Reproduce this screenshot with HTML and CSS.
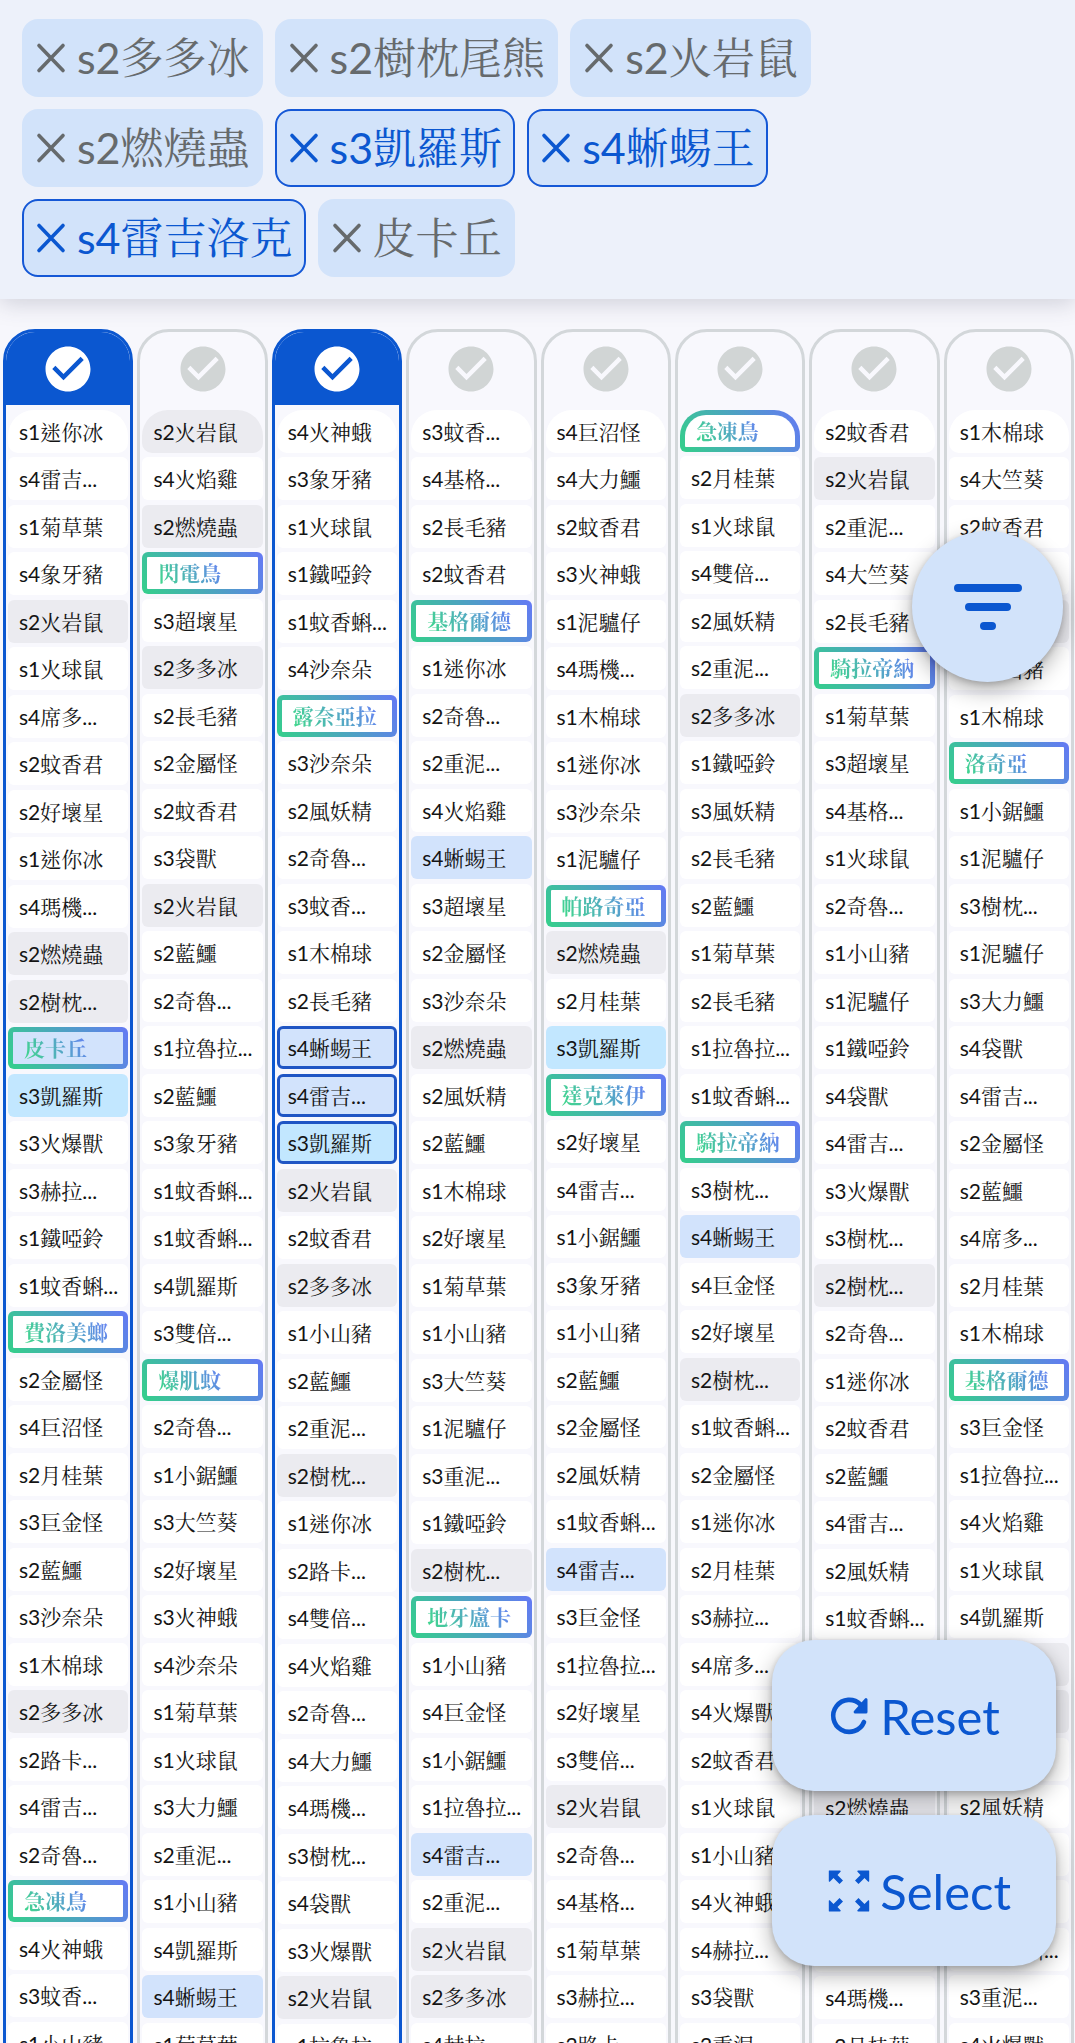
FILE: index.html
```
<!DOCTYPE html>
<html lang="zh-Hant">
<head>
<meta charset="utf-8">
<meta name="viewport" content="width=device-width, initial-scale=1">
<title>Picks</title>
<link rel="stylesheet" href="styles.css">
</head>
<body>
<svg class="defs" aria-hidden="true">
  <symbol id="close" viewBox="0 0 48 48"><path d="M12 11.500 36 36.500M36 11.500 12 36.500" fill="none" stroke="currentColor" stroke-width="3.600" stroke-linecap="round"/></symbol>
  <symbol id="check" viewBox="0 0 24 24"><path d="M12 2C6.480 2 2 6.480 2 12s4.480 10 10 10 10-4.480 10-10S17.520 2 12 2zm-2 15-5-5 1.410-1.410L10 14.170l7.590-7.590L19 8l-9 9z" fill="currentColor"/></symbol>
</svg>

<header class="chips">
  <button class="chip"><svg class="x"><use href="#close"/></svg>s2多多冰</button>
  <button class="chip"><svg class="x"><use href="#close"/></svg>s2樹枕尾熊</button>
  <button class="chip"><svg class="x"><use href="#close"/></svg>s2火岩鼠</button>
  <button class="chip"><svg class="x"><use href="#close"/></svg>s2燃燒蟲</button>
  <button class="chip chip-on"><svg class="x"><use href="#close"/></svg>s3凱羅斯</button>
  <button class="chip chip-on"><svg class="x"><use href="#close"/></svg>s4蜥蜴王</button>
  <button class="chip chip-on"><svg class="x"><use href="#close"/></svg>s4雷吉洛克</button>
  <button class="chip"><svg class="x"><use href="#close"/></svg>皮卡丘</button>
</header>

<main class="board" id="board"></main>

<button class="fab fab-round" aria-label="Filter">
  <svg class="filter" viewBox="0 0 68 46"><path d="M4 4H64M15 23H53M30 42H38" fill="none" stroke="currentColor" stroke-width="8" stroke-linecap="round"/></svg>
</button>

<div class="actions">
  <button class="fab fab-wide">
    <svg class="icon" viewBox="0 0 54 54"><path d="M42 33A16 16 0 1 1 38.500 15.500" fill="none" stroke="currentColor" stroke-width="4.600" stroke-linecap="round"/><path d="M43 9.500a1.500 1.500 0 0 1 2.500 1V23a1.500 1.500 0 0 1-1.500 1.500H33a1.500 1.500 0 0 1-1-2.500z" fill="currentColor"/></svg>
    Reset
  </button>
  <button class="fab fab-wide">
    <svg class="icon" viewBox="0 0 54 54"><g id="q"><path id="arrow" d="M7 6.500H18a.7.7 0 0 1 .500 1.200L15.500 11 21 16.500 17.500 20 11.500 14 8 17.500a.7.7 0 0 1-1.200-.500V7z" fill="currentColor"/><use href="#arrow" transform="matrix(-1 0 0 1 54 0)"/></g><use href="#q" transform="matrix(1 0 0 -1 0 54)"/></svg>
    Select
  </button>
</div>
<script src="board.js"></script>
</body>
</html>
```

FILE: styles.css
```
* { box-sizing: border-box; }

html { height: 100%; }

body {
  height: 100%;
  margin: 0;
  overflow: hidden;
  display: flex;
  flex-direction: column;
  background: #f7f7fc;
  color: #141414;
  font-family: Lato, "Noto Serif CJK TC", "Noto Sans CJK TC", sans-serif;
}

button {
  margin: 0;
  border: 0;
  background: none;
  color: inherit;
  font: inherit;
  cursor: pointer;
}

.defs { position: absolute; width: 0; height: 0; }

/* selected picks */
.chips {
  flex: none;
  display: flex;
  flex-wrap: wrap;
  gap: 12px;
  padding: 19px 22px 22px;
  background: #edf1fa;
  box-shadow: 0 4px 22px rgba(60, 64, 90, .22);
}

.chip {
  display: flex;
  align-items: center;
  gap: 2px;
  height: 78px;
  padding: 0 11px 0 3px;
  border: 2px solid transparent;
  border-radius: 16px;
  background: #d2e3fa;
  color: #666a6c;
  font-size: 43px;
  line-height: 60px;
  white-space: nowrap;
}

.chip-on { border-color: #1558d6; color: #0b57d0; }

.x { width: 48px; height: 48px; }

/* columns */
.board {
  flex: 1;
  min-height: 0;
  overflow: hidden;
  display: grid;
  grid-template-columns: repeat(8, minmax(0, 1fr));
  align-items: start;
  gap: 4px;
  padding: 30px 1px 0 3px;
}

.col {
  border: 3px solid #d3d7da;
  border-radius: 32px 32px 0 0;
  background: #f8f8fd;
}

.col-on { border-color: #0b57d0; }

.col-head {
  display: flex;
  justify-content: center;
  align-items: center;
  width: 100%;
  height: 73px;
  padding: 0;
  border-radius: 28px 28px 0 0;
  color: #d1d5d5;
}

.col-on .col-head { border-radius: 0; background: #0b57d0; color: #fff; }
.col-on { overflow: hidden; }

.check { width: 54px; height: 54px; }

.list {
  margin: 0;
  padding: 5px 2px 0;
  list-style: none;
}

.item {
  height: 43px;
  margin-bottom: 4px;
  padding-left: 11px;
  border-radius: 6px;
  background: #fff;
  font-size: 21px;
  line-height: 43px;
  white-space: nowrap;
  overflow: hidden;
}

.item:nth-child(even) { margin-bottom: 5px; }
.item:first-child { border-radius: 26px 26px 10px 10px; }

.used { background: #ebebf0; }
.blue { background: #d2e3fc; }
.cyan { background: #c2e7ff; }

.picked {
  padding-left: 8px;
  border: 3px solid #1f55c4;
  line-height: 37px;
}

.rare {
  height: 42px;
  padding-left: 11px;
  border: 5px solid transparent;
  background:
    linear-gradient(#fff, #fff) padding-box,
    linear-gradient(60deg, #34d08a, #6478f5) border-box;
  font-weight: 700;
  line-height: 32px;
}

.rare:first-child { border-radius: 26px 26px 6px 6px; }

.rare.blue {
  background:
    linear-gradient(#d2e3fc, #d2e3fc) padding-box,
    linear-gradient(60deg, #34d08a, #6478f5) border-box;
}

.rare span {
  background: linear-gradient(60deg, #3fd98a, #6680f5);
  -webkit-background-clip: text;
  background-clip: text;
  color: transparent;
}

/* floating buttons */
.fab {
  display: flex;
  align-items: center;
  height: 151px;
  background: #d2e3fa;
  color: #0b57d0;
  font-size: 49px;
  box-shadow: 0 8px 22px rgba(0, 0, 0, .32), 0 2px 6px rgba(0, 0, 0, .18);
}

.fab-round {
  position: fixed;
  top: 531px;
  right: 12px;
  justify-content: center;
  width: 151px;
  padding: 0;
  border-radius: 50%;
}

.filter { width: 68px; height: 46px; }

.actions {
  position: fixed;
  right: 19px;
  bottom: 77px;
  display: flex;
  flex-direction: column;
  gap: 24px;
}

.fab-wide {
  gap: 4px;
  padding: 0 45px 0 50px;
  border-radius: 42px;
}

.icon { width: 54px; height: 54px; }
```

FILE: board.js
```
// One line per column. Prefixes: - used, + blue, * cyan, # picked, ! rare.
const columns = [
  "s1迷你冰 s4雷吉... s1菊草葉 s4象牙豬 -s2火岩鼠 s1火球鼠 s4席多... s2蚊香君 s2好壞星 s1迷你冰 s4瑪機... -s2燃燒蟲 -s2樹枕... !+皮卡丘 *s3凱羅斯 s3火爆獸 s3赫拉... s1鐵啞鈴 s1蚊香蝌... !費洛美螂 s2金屬怪 s4巨沼怪 s2月桂葉 s3巨金怪 s2藍鱷 s3沙奈朵 s1木棉球 -s2多多冰 s2路卡... s4雷吉... s2奇魯... !急凍鳥 s4火神蛾 s3蚊香... s1小山豬",
  "-s2火岩鼠 s4火焰雞 -s2燃燒蟲 !閃電鳥 s3超壞星 -s2多多冰 s2長毛豬 s2金屬怪 s2蚊香君 s3袋獸 -s2火岩鼠 s2藍鱷 s2奇魯... s1拉魯拉... s2藍鱷 s3象牙豬 s1蚊香蝌... s1蚊香蝌... s4凱羅斯 s3雙倍... !爆肌蚊 s2奇魯... s1小鋸鱷 s3大竺葵 s2好壞星 s3火神蛾 s4沙奈朵 s1菊草葉 s1火球鼠 s3大力鱷 s2重泥... s1小山豬 s4凱羅斯 +s4蜥蜴王 s1菊草葉",
  "s4火神蛾 s3象牙豬 s1火球鼠 s1鐵啞鈴 s1蚊香蝌... s4沙奈朵 !露奈亞拉 s3沙奈朵 s2風妖精 s2奇魯... s3蚊香... s1木棉球 s2長毛豬 #+s4蜥蜴王 #+s4雷吉... #*s3凱羅斯 -s2火岩鼠 s2蚊香君 -s2多多冰 s1小山豬 s2藍鱷 s2重泥... -s2樹枕... s1迷你冰 s2路卡... s4雙倍... s4火焰雞 s2奇魯... s4大力鱷 s4瑪機... s3樹枕... s4袋獸 s3火爆獸 -s2火岩鼠 s1拉魯拉...",
  "s3蚊香... s4基格... s2長毛豬 s2蚊香君 !基格爾德 s1迷你冰 s2奇魯... s2重泥... s4火焰雞 +s4蜥蜴王 s3超壞星 s2金屬怪 s3沙奈朵 -s2燃燒蟲 s2風妖精 s2藍鱷 s1木棉球 s2好壞星 s1菊草葉 s1小山豬 s3大竺葵 s1泥驢仔 s3重泥... s1鐵啞鈴 -s2樹枕... !地牙盧卡 s1小山豬 s4巨金怪 s1小鋸鱷 s1拉魯拉... +s4雷吉... s2重泥... -s2火岩鼠 -s2多多冰 s4赫拉...",
  "s4巨沼怪 s4大力鱷 s2蚊香君 s3火神蛾 s1泥驢仔 s4瑪機... s1木棉球 s1迷你冰 s3沙奈朵 s1泥驢仔 !帕路奇亞 -s2燃燒蟲 s2月桂葉 *s3凱羅斯 !達克萊伊 s2好壞星 s4雷吉... s1小鋸鱷 s3象牙豬 s1小山豬 s2藍鱷 s2金屬怪 s2風妖精 s1蚊香蝌... +s4雷吉... s3巨金怪 s1拉魯拉... s2好壞星 s3雙倍... -s2火岩鼠 s2奇魯... s4基格... s1菊草葉 s3赫拉... s2路卡...",
  "!急凍鳥 s2月桂葉 s1火球鼠 s4雙倍... s2風妖精 s2重泥... -s2多多冰 s1鐵啞鈴 s3風妖精 s2長毛豬 s2藍鱷 s1菊草葉 s2長毛豬 s1拉魯拉... s1蚊香蝌... !騎拉帝納 s3樹枕... +s4蜥蜴王 s4巨金怪 s2好壞星 -s2樹枕... s1蚊香蝌... s2金屬怪 s1迷你冰 s2月桂葉 s3赫拉... s4席多... s4火爆獸 s2蚊香君 s1火球鼠 s1小山豬 s4火神蛾 s4赫拉... s3袋獸 s2重泥...",
  "s2蚊香君 -s2火岩鼠 s2重泥... s4大竺葵 s2長毛豬 !騎拉帝納 s1菊草葉 s3超壞星 s4基格... s1火球鼠 s2奇魯... s1小山豬 s1泥驢仔 s1鐵啞鈴 s4袋獸 s4雷吉... s3火爆獸 s3樹枕... -s2樹枕... s2奇魯... s1迷你冰 s2蚊香君 s2藍鱷 s4雷吉... s2風妖精 s1蚊香蝌... s1木棉球 s2藍鱷 s3袋獸 -s2燃燒蟲 s1迷你冰 s2金屬怪 s3沙奈朵 s4瑪機... s2月桂葉",
  "s1木棉球 s4大竺葵 s2蚊香君 s1泥驢仔 -s2燃燒蟲 s1小山豬 s1木棉球 !洛奇亞 s1小鋸鱷 s1泥驢仔 s3樹枕... s1泥驢仔 s3大力鱷 s4袋獸 s4雷吉... s2金屬怪 s2藍鱷 s4席多... s2月桂葉 s1木棉球 !基格爾德 s3巨金怪 s1拉魯拉... s4火焰雞 s1火球鼠 s4凱羅斯 -s2多多冰 -s2火岩鼠 s1菊草葉 s2風妖精 s1火球鼠 s2好壞星 s1蚊香蝌... s3重泥... s4火爆獸"
];
const selected = [0, 2];
const kinds = { "-": "used", "+": "blue", "*": "cyan", "#": "picked", "!": "rare" };

document.getElementById("board").innerHTML = columns.map((line, i) => {
  const on = selected.includes(i);
  const items = line.split(" ").map(entry => {
    const [, marks, name] = entry.match(/^([-+*#!]*)(.*)$/);
    const names = ["item", ...[...marks].map(m => kinds[m])].join(" ");
    return `<li class="${names}"><span>${name}</span></li>`;
  }).join("");
  return `<section class="col${on ? " col-on" : ""}">
    <button class="col-head" aria-pressed="${on}" aria-label="Column ${i + 1}"><svg class="check"><use href="#check"/></svg></button>
    <ul class="list">${items}</ul>
  </section>`;
}).join("");
```
